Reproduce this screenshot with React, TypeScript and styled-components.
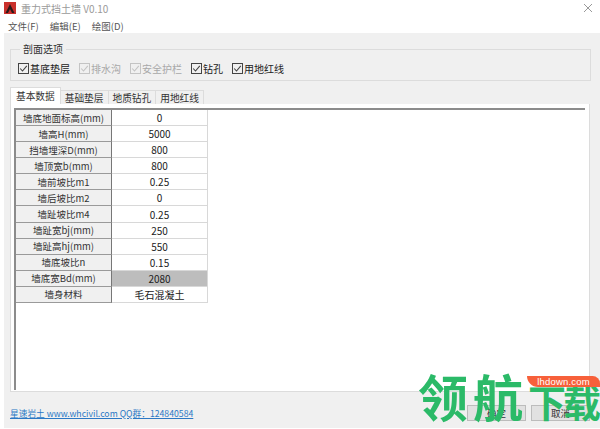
import { Fragment } from "react";
import styled, { createGlobalStyle } from "styled-components";

const Global = createGlobalStyle`
  html, body {
    margin: 0;
    padding: 0;
    background: #fff;
  }
  * {
    box-sizing: border-box;
  }
`;

const Window = styled.div`
  position: relative;
  width: 600px;
  height: 429px;
  overflow: hidden;
  display: flex;
  flex-direction: column;
  background: #fff;
  color: #222;
  font: 10px "Noto Sans CJK SC", "Liberation Sans", sans-serif;
`;

const TitleBar = styled.div`
  height: 18px;
  display: flex;
  align-items: center;
  padding: 0 7px 2px 4px;
  gap: 5px;
  color: #9a9a9a;
  font-size: 10px;
`;

const CloseIcon = styled.svg`
  margin-left: auto;
  width: 10px;
  height: 10px;
`;

const MenuBar = styled.div`
  height: 15px;
  display: flex;
  align-items: center;
  gap: 11px;
  padding-left: 8px;
  color: #555;
  font-size: 9.5px;
`;

const Client = styled.div`
  flex: 1;
  margin: 0 0 1px 4px;
  padding: 11px 9px 0 6px;
  background: #f0f0f0;
  display: flex;
  flex-direction: column;
`;

const GroupBox = styled.fieldset`
  margin: 0;
  height: 37px;
  padding: 7px 0 0 7px;
  border: 1px solid #dcdcdc;
  display: flex;
  align-items: center;
  gap: 9px;
  min-inline-size: 0;
`;

const GroupTitle = styled.legend`
  padding: 0 3px;
  margin-left: 2px;
  line-height: 10px;
  font-size: 10px;
  color: #333;
`;

const Option = styled.label<{ $off?: boolean }>`
  display: flex;
  align-items: center;
  gap: 1px;
  font-size: 10px;
  color: ${(p) => (p.$off ? "#a8a8a8" : "#222")};
`;

const Box = styled.svg<{ $off?: boolean }>`
  width: 11px;
  height: 11px;
  stroke: ${(p) => (p.$off ? "#c4c4c4" : "#444")};
  fill: none;
`;

const Tabs = styled.div`
  margin-top: 6px;
  height: 17px;
  display: flex;
  align-items: flex-end;
`;

const Tab = styled.div<{ $active?: boolean }>`
  height: ${(p) => (p.$active ? "17px" : "14px")};
  padding: ${(p) => (p.$active ? "0 5px 0 5px" : "0 4px")};
  margin-left: ${(p) => (p.$active ? "0" : "-1px")};
  display: flex;
  align-items: center;
  font-size: 9.7px;
  color: #333;
  background: ${(p) => (p.$active ? "#fff" : "#f0f0f0")};
  border: 1px solid #dcdcdc;
  border-bottom: 0;
`;

const Page = styled.div`
  width: 580px;
  height: 288px;
  padding: 4px 4px 1px 3px;
  background: #fff;
  border: 1px solid #dcdcdc;
  border-top: 0;
`;

const Grid = styled.div`
  height: 100%;
  border-top: 2px solid #8c8c8c;
  border-left: 2px solid #8c8c8c;
  display: grid;
  grid-template-columns: 96px 96px;
  grid-auto-rows: 16.09px;
  align-content: start;
`;

const HeadCell = styled.div`
  display: flex;
  align-items: center;
  justify-content: center;
  background: #f0f0f0;
  border-right: 1px solid #777;
  border-bottom: 1px solid #9a9a9a;
  font-size: 9.5px;
  color: #333;
`;

const ValueCell = styled.div<{ $computed?: boolean }>`
  display: flex;
  align-items: center;
  justify-content: center;
  background: ${(p) => (p.$computed ? "#bdbdbd" : "#fff")};
  border-right: 1px solid #d8d8d8;
  border-bottom: 1px solid #d8d8d8;
  font-size: 10px;
  color: #222;
`;

const Footer = styled.div`
  flex: 1;
  display: flex;
  align-items: center;
  padding: 6px 1px 0 0;
`;

const SiteLink = styled.a`
  color: #2b78c5;
  font-size: 8.7px;
  text-decoration: underline;
`;

const Buttons = styled.div`
  margin-left: auto;
  display: flex;
  gap: 5px;
`;

const Button = styled.div`
  width: 59px;
  height: 16px;
  display: flex;
  align-items: center;
  justify-content: center;
  background: #e1e1e1;
  border: 1px solid #bcbcbc;
  font-size: 9.5px;
  color: #333;
`;

const Watermark = styled.div`
  position: absolute;
  left: 418px;
  top: 370px;
  height: 50px;
  display: flex;
  align-items: flex-end;
  color: #2bba68;
  font-family: "Noto Sans CJK SC", sans-serif;
  font-weight: 700;
`;

const Glyph = styled.span<{ $size: number; $gap: number }>`
  font-size: ${(p) => p.$size}px;
  line-height: ${(p) => p.$size}px;
  margin-left: ${(p) => p.$gap}px;
`;

const Badge = styled.div`
  position: absolute;
  left: 527px;
  top: 376px;
  width: 73px;
  height: 11px;
  background: #f7603a;
  border-radius: 0 8px 0 12px;
  color: #fff;
  font: 9.5px/11px "Liberation Sans", sans-serif;
  letter-spacing: 0.2px;
  text-align: center;
`;

const rows: [string, string, boolean?][] = [
  ["墙底地面标高(mm)", "0"],
  ["墙高H(mm)", "5000"],
  ["挡墙埋深D(mm)", "800"],
  ["墙顶宽b(mm)", "800"],
  ["墙前坡比m1", "0.25"],
  ["墙后坡比m2", "0"],
  ["墙趾坡比m4", "0.25"],
  ["墙趾宽bj(mm)", "250"],
  ["墙趾高hj(mm)", "550"],
  ["墙底坡比n", "0.15"],
  ["墙底宽Bd(mm)", "2080", true],
  ["墙身材料", "毛石混凝土"],
];

const options = [
  { label: "基底垫层" },
  { label: "排水沟", off: true },
  { label: "安全护栏", off: true },
  { label: "钻孔" },
  { label: "用地红线" },
];

const tabs = ["基本数据", "基础垫层", "地质钻孔", "用地红线"];

const CheckBox = ({ off }: { off?: boolean }) => (
  <Box $off={off} viewBox="0 0 11 11">
    <rect x="0.5" y="0.5" width="10" height="10" />
    <path d="M2.2 5.5 4.5 8 8.8 2.8" strokeWidth="1.1" />
  </Box>
);

export default function App() {
  return (
    <Window>
      <Global />
      <TitleBar>
        <svg width="12" height="12" viewBox="0 0 12 12">
          <rect width="12" height="12" fill="#c9302c" />
          <path d="M1.5 11 6 2l4.5 9H8L6 7l-2 4z" fill="#2a1a1a" />
        </svg>
        <span>重力式挡土墙 V0.10</span>
        <CloseIcon viewBox="0 0 10 10">
          <path d="M1 1l8 8M9 1l-8 8" stroke="#999" fill="none" />
        </CloseIcon>
      </TitleBar>
      <MenuBar>
        <span>文件(F)</span>
        <span>编辑(E)</span>
        <span>绘图(D)</span>
      </MenuBar>
      <Client>
        <GroupBox>
          <GroupTitle>剖面选项</GroupTitle>
          {options.map((o) => (
            <Option key={o.label} $off={o.off}>
              <CheckBox off={o.off} />
              {o.label}
            </Option>
          ))}
        </GroupBox>
        <Tabs>
          {tabs.map((t, i) => (
            <Tab key={t} $active={i === 0}>
              {t}
            </Tab>
          ))}
        </Tabs>
        <Page>
          <Grid>
            {rows.map(([name, value, computed]) => (
              <Fragment key={name}>
                <HeadCell>{name}</HeadCell>
                <ValueCell $computed={computed}>{value}</ValueCell>
              </Fragment>
            ))}
          </Grid>
        </Page>
        <Footer>
          <SiteLink>星速岩土 www.whcivil.com QQ群：124840584</SiteLink>
          <Buttons>
            <Button>确定</Button>
            <Button>取消</Button>
          </Buttons>
        </Footer>
      </Client>
      <Watermark>
        <Glyph $size={50} $gap={0}>领</Glyph>
        <Glyph $size={50} $gap={5}>航</Glyph>
        <Glyph $size={38} $gap={5}>下</Glyph>
        <Glyph $size={38} $gap={-3}>载</Glyph>
      </Watermark>
      <Badge>lhdown.com</Badge>
    </Window>
  );
}
